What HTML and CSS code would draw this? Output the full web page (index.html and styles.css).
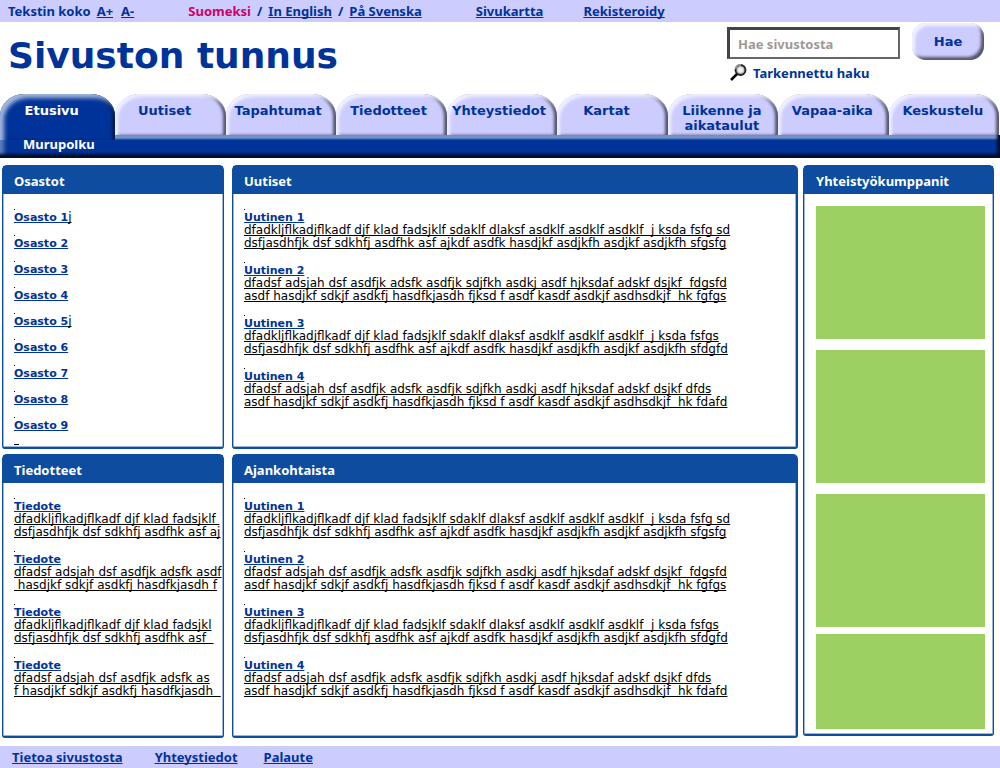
FILE: index.html
```html
<!DOCTYPE html>
<html lang="fi">
<head>
<meta charset="utf-8">
<title>Sivuston tunnus</title>
<link rel="stylesheet" href="styles.css">
</head>
<body>
<div class="page">
  <div class="topbar">
    <div class="text-size"><span>Tekstin koko</span><a href="#">A+</a><a href="#">A-</a></div>
    <div class="languages"><span class="current">Suomeksi</span><span>/</span><a href="#">In English</a><span>/</span><a href="#">På Svenska</a></div>
    <a class="sitemap" href="#">Sivukartta</a>
    <a href="#">Rekisteroidy</a>
  </div>

  <header class="masthead">
    <h1>Sivuston tunnus</h1>
    <form class="search">
      <div class="search-field">
        <input type="text" placeholder="Hae sivustosta" aria-label="Hae sivustosta">
        <a class="advanced" href="#"><svg width="18" height="18" viewBox="0 0 18 18" aria-hidden="true"><defs><radialGradient id="lens"><stop offset="0" stop-color="#fff"/><stop offset=".5" stop-color="#e2e2e2"/><stop offset="1" stop-color="#777"/></radialGradient></defs><path d="M1 16 7.500 9.500" stroke="#000" stroke-width="2.500"/><circle cx="10.500" cy="6" r="5" fill="url(#lens)" stroke="#222" stroke-width="1.800"/><path d="M5.500 5A5 5 0 0 1 11 1" fill="none" stroke="#999" stroke-width="1.800"/></svg>Tarkennettu haku</a>
      </div>
      <button type="button">Hae</button>
    </form>
  </header>

  <nav>
    <div class="tabs">
      <a class="tab active" href="#">Etusivu</a>
      <a class="tab" href="#">Uutiset</a>
      <a class="tab" href="#">Tapahtumat</a>
      <a class="tab" href="#">Tiedotteet</a>
      <a class="tab" href="#">Yhteystiedot</a>
      <a class="tab" href="#">Kartat</a>
      <a class="tab" href="#">Liikenne ja aikataulut</a>
      <a class="tab" href="#">Vapaa-aika</a>
      <a class="tab" href="#">Keskustelu</a>
    </div>
    <div class="crumbs">Murupolku</div>
  </nav>

  <main>
    <div class="boards">
      <section class="panel">
        <h2>Osastot</h2>
        <ul class="items sections">
          <li><a class="title" href="#">Osasto 1</a><a class="text" href="#">j</a></li>
          <li><a class="title" href="#">Osasto 2</a></li>
          <li><a class="title" href="#">Osasto 3</a></li>
          <li><a class="title" href="#">Osasto 4</a></li>
          <li><a class="title" href="#">Osasto 5</a><a class="text" href="#">j</a></li>
          <li><a class="title" href="#">Osasto 6</a></li>
          <li><a class="title" href="#">Osasto 7</a></li>
          <li><a class="title" href="#">Osasto 8</a></li>
          <li class="last"><a class="title" href="#">Osasto 9</a></li>
        </ul>
      </section>
      <section class="panel wide">
        <h2>Uutiset</h2>
        <ul class="items">
          <li><a class="title" href="#">Uutinen 1</a>
<a class="text" href="#">dfadkljflkadjflkadf djf klad fadsjklf sdaklf dlaksf asdklf asdklf asdklf  j ksda fsfg sd
dsfjasdhfjk dsf sdkhfj asdfhk asf ajkdf asdfk hasdjkf asdjkfh asdjkf asdjkfh sfgsfg</a></li>
          <li><a class="title" href="#">Uutinen 2</a>
<a class="text" href="#">dfadsf adsjah dsf asdfjk adsfk asdfjk sdjfkh asdkj asdf hjksdaf adskf dsjkf  fdgsfd
asdf hasdjkf sdkjf asdkfj hasdfkjasdh fjksd f asdf kasdf asdkjf asdhsdkjf  hk fgfgs</a></li>
          <li><a class="title" href="#">Uutinen 3</a>
<a class="text" href="#">dfadkljflkadjflkadf djf klad fadsjklf sdaklf dlaksf asdklf asdklf asdklf  j ksda fsfgs
dsfjasdhfjk dsf sdkhfj asdfhk asf ajkdf asdfk hasdjkf asdjkfh asdjkf asdjkfh sfdgfd</a></li>
          <li><a class="title" href="#">Uutinen 4</a>
<a class="text" href="#">dfadsf adsjah dsf asdfjk adsfk asdfjk sdjfkh asdkj asdf hjksdaf adskf dsjkf dfds
asdf hasdjkf sdkjf asdkfj hasdfkjasdh fjksd f asdf kasdf asdkjf asdhsdkjf  hk fdafd</a></li>
        </ul>
      </section>
      <section class="panel">
        <h2>Tiedotteet</h2>
        <ul class="items">
          <li><a class="title" href="#">Tiedote</a>
<a class="text" href="#">dfadkljflkadjflkadf djf klad fadsjklf 
dsfjasdhfjk dsf sdkhfj asdfhk asf aj</a></li>
          <li><a class="title" href="#">Tiedote</a>
<a class="text" href="#">dfadsf adsjah dsf asdfjk adsfk asdf
 hasdjkf sdkjf asdkfj hasdfkjasdh f</a></li>
          <li><a class="title" href="#">Tiedote</a>
<a class="text" href="#">dfadkljflkadjflkadf djf klad fadsjkl
dsfjasdhfjk dsf sdkhfj asdfhk asf  </a></li>
          <li><a class="title" href="#">Tiedote</a>
<a class="text" href="#">dfadsf adsjah dsf asdfjk adsfk as
f hasdjkf sdkjf asdkfj hasdfkjasdh  </a></li>
        </ul>
      </section>
      <section class="panel wide">
        <h2>Ajankohtaista</h2>
        <ul class="items">
          <li><a class="title" href="#">Uutinen 1</a>
<a class="text" href="#">dfadkljflkadjflkadf djf klad fadsjklf sdaklf dlaksf asdklf asdklf asdklf  j ksda fsfg sd
dsfjasdhfjk dsf sdkhfj asdfhk asf ajkdf asdfk hasdjkf asdjkfh asdjkf asdjkfh sfgsfg</a></li>
          <li><a class="title" href="#">Uutinen 2</a>
<a class="text" href="#">dfadsf adsjah dsf asdfjk adsfk asdfjk sdjfkh asdkj asdf hjksdaf adskf dsjkf  fdgsfd
asdf hasdjkf sdkjf asdkfj hasdfkjasdh fjksd f asdf kasdf asdkjf asdhsdkjf  hk fgfgs</a></li>
          <li><a class="title" href="#">Uutinen 3</a>
<a class="text" href="#">dfadkljflkadjflkadf djf klad fadsjklf sdaklf dlaksf asdklf asdklf asdklf  j ksda fsfgs
dsfjasdhfjk dsf sdkhfj asdfhk asf ajkdf asdfk hasdjkf asdjkfh asdjkf asdjkfh sfdgfd</a></li>
          <li><a class="title" href="#">Uutinen 4</a>
<a class="text" href="#">dfadsf adsjah dsf asdfjk adsfk asdfjk sdjfkh asdkj asdf hjksdaf adskf dsjkf dfds
asdf hasdjkf sdkjf asdkfj hasdfkjasdh fjksd f asdf kasdf asdkjf asdhsdkjf  hk fdafd</a></li>
        </ul>
      </section>
    </div>
    <aside class="panel partners">
      <h2>Yhteistyökumppanit</h2>
      <div class="ads">
        <div class="ad"></div>
        <div class="ad"></div>
        <div class="ad"></div>
        <div class="ad short"></div>
      </div>
    </aside>
  </main>

  <footer>
    <a href="#">Tietoa sivustosta</a>
    <a href="#">Yhteystiedot</a>
    <a href="#">Palaute</a>
  </footer>
</div>
</body>
</html>
```
FILE: styles.css
```css
* { box-sizing: border-box; }
body {
  margin: 0;
  background: #fff;
  color: #039;
  font: bold 13px/16px "Noto Sans", "Open Sans", sans-serif;
}
a { color: inherit; text-decoration-skip-ink: none; }
h1, h2, ul { margin: 0; padding: 0; }
.page { min-height: 100vh; display: flex; flex-direction: column; }

.topbar {
  display: flex;
  align-items: center;
  height: 22px;
  padding: 0 8px;
  background: #ccf;
}
.text-size { display: flex; gap: 8px; }
.text-size span { margin-right: -2px; }
.languages { display: flex; gap: 6px; margin-left: 54px; }
.current { color: #c06; }
.sitemap { margin: 0 40px 0 54px; }

.masthead {
  display: flex;
  justify-content: space-between;
  height: 72px;
  padding: 0 16px 0 8px;
}
h1 { padding-top: 12px; font: bold 36px/44px "DejaVu Sans", sans-serif; }
.search { display: flex; align-items: flex-start; gap: 12px; }
.search-field { padding-top: 5px; }
.search input {
  display: block;
  width: 173px;
  height: 32px;
  padding: 0 8px;
  border: 3px solid;
  border-width: 3px 2px 2px 3px;
  border-color: #444 #666 #666 #444;
  background: #fff;
  font: inherit;
}
.search input::placeholder { color: #a09898; opacity: 1; }
.advanced {
  display: flex;
  align-items: center;
  gap: 5px;
  margin: 5px 0 0 3px;
  text-decoration: none;
}
.search button {
  width: 72px;
  height: 37px;
  margin-top: 1px;
  border: 0;
  border-radius: 14px;
  background: #ccf;
  box-shadow: inset 3px 3px 3px #f0f0ff, inset -3px -3px 3px #55556c;
  color: #039;
  font: bold 13px/16px "DejaVu Sans", sans-serif;
}

.tabs {
  display: grid;
  grid-template-columns: 115fr repeat(8, 110fr);
  grid-template-rows: 41px;
  padding-right: 1px;
}
.tab {
  position: relative;
  padding: 9px 14px 0 2px;
  border-radius: 24px 24px 0 0 / 22px 22px 0 0;
  background: #ccf;
  box-shadow: inset 3px 3px 3px #efefff, inset -3px 0 3px #555570;
  font: bold 13px/15px "DejaVu Sans", sans-serif;
  text-align: center;
  text-decoration: none;
}
.tab:nth-child(3), .tab:nth-child(4), .tab:nth-child(5) { padding: 9px 6px 0 0; }
.tab:nth-child(7), .tab:nth-child(8), .tab:nth-child(9) { padding: 9px 4px 0 2px; }
.tab.active {
  z-index: 1;
  height: 46px;
  background: #039;
  box-shadow: inset 4px 4px 4px #a5b9dd, inset -3px 0 3px #001b50;
  color: #fff;
}
.crumbs {
  position: relative;
  height: 23px;
  padding: 1px 23px 0;
  background: #039;
  box-shadow: inset -3px -4px 3px #000c28, inset 4px 0 4px #5b7fbe, inset 0 4px 2px #7b99cd;
  color: #fff;
}

main {
  flex: 1;
  display: grid;
  grid-template-columns: 796fr 191fr;
  gap: 5px;
  padding: 7px 6px 8px 2px;
}
.boards {
  display: grid;
  grid-template-columns: 222fr 566fr;
  grid-template-rows: 1fr 1fr;
  gap: 5px 8px;
}
.panel {
  min-width: 0;
  border: 1px solid #0d4c9f;
  border-bottom-width: 2px;
  border-radius: 5px 5px 3px 3px;
  box-shadow: inset 0 0 0 1px #9db5de;
}
.panel.wide { border-right-width: 2px; }
.panel h2 {
  height: 28px;
  padding: 6px 11px 0;
  background: #0d4c9f;
  color: #fff;
  font: inherit;
  line-height: 18px;
}
.items {
  display: grid;
  gap: 14px;
  padding: 17px 0 0 11px;
  list-style: none;
  color: #000;
  font: 11px/13px "DejaVu Sans", sans-serif;
  white-space: pre;
}
.items.sections { gap: 13px; padding-top: 17px; }
.items li { position: relative; }
.items li::before {
  content: "";
  position: absolute;
  top: -2px;
  left: 0;
  width: 1px;
  height: 1px;
  background: #000;
}
.items .last::after {
  content: "";
  position: absolute;
  top: 25px;
  left: 0;
  width: 5px;
  height: 1px;
  background: #000;
}
.title { color: #039; font-weight: bold; }
.text { font-size: 12px; }
.partners { margin-bottom: 2px; }
.partners h2 { padding-left: 12px; }
.ads { display: grid; gap: 11px; padding: 12px 8px 2px 12px; }
.ad { height: 133px; background: #9dd063; }
.ad.short { height: 95px; margin-top: -4px; }

footer {
  display: flex;
  align-items: center;
  height: 22px;
  padding: 0 12px;
  background: #ccf;
}
footer a { margin-right: 32px; }
footer a + a { margin-right: 26px; }
```
